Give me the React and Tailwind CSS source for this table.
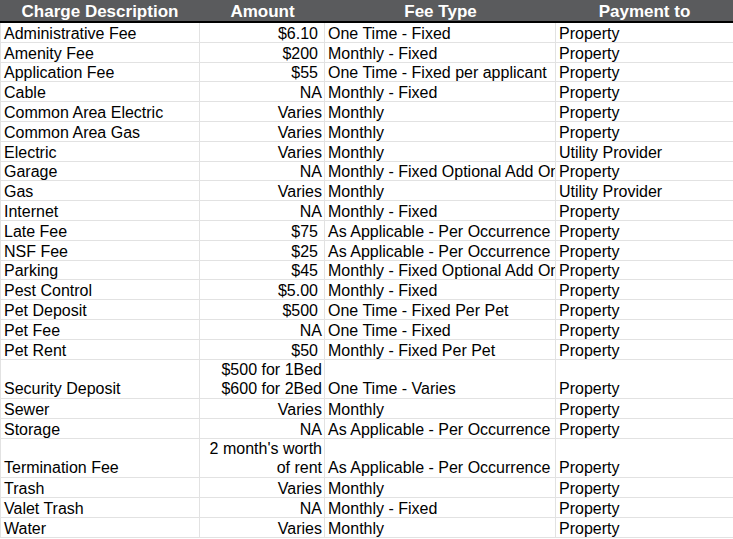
const rows = [
  ["Administrative Fee", "$6.10", "One Time - Fixed", "Property"],
  ["Amenity Fee", "$200", "Monthly - Fixed", "Property"],
  ["Application Fee", "$55", "One Time - Fixed per applicant", "Property"],
  ["Cable", "NA", "Monthly - Fixed", "Property"],
  ["Common Area Electric", "Varies", "Monthly", "Property"],
  ["Common Area Gas", "Varies", "Monthly", "Property"],
  ["Electric", "Varies", "Monthly", "Utility Provider"],
  ["Garage", "NA", "Monthly - Fixed Optional Add On", "Property"],
  ["Gas", "Varies", "Monthly", "Utility Provider"],
  ["Internet", "NA", "Monthly - Fixed", "Property"],
  ["Late Fee", "$75", "As Applicable - Per Occurrence", "Property"],
  ["NSF Fee", "$25", "As Applicable - Per Occurrence", "Property"],
  ["Parking", "$45", "Monthly - Fixed Optional Add On", "Property"],
  ["Pest Control", "$5.00", "Monthly - Fixed", "Property"],
  ["Pet Deposit", "$500", "One Time - Fixed Per Pet", "Property"],
  ["Pet Fee", "NA", "One Time - Fixed", "Property"],
  ["Pet Rent", "$50", "Monthly - Fixed Per Pet", "Property"],
  ["Security Deposit", ["$500 for 1Bed", "$600 for 2Bed"], "One Time - Varies", "Property"],
  ["Sewer", "Varies", "Monthly", "Property"],
  ["Storage", "NA", "As Applicable - Per Occurrence", "Property"],
  ["Termination Fee", ["2 month's worth", "of rent"], "As Applicable - Per Occurrence", "Property"],
  ["Trash", "Varies", "Monthly", "Property"],
  ["Valet Trash", "NA", "Monthly - Fixed", "Property"],
  ["Water", "Varies", "Monthly", "Property"],
];

const cols = "grid grid-cols-[200px_125px_231px_1fr]";

const Cell = ({ children, className = "" }) => (
  <div
    className={`flex items-end overflow-hidden whitespace-nowrap border-r border-[#e2e2e2] ${className}`}
  >
    {children}
  </div>
);

export default function App() {
  return (
    <div
      className="w-[733px] h-[539px] overflow-hidden bg-white text-black"
      style={{ fontFamily: '"Liberation Sans", Arial, sans-serif' }}
    >
      {/* header */}
      <div
        className={`${cols} h-[23px] bg-[#5a5b5d] border-b-2 border-black text-white font-bold text-[17px] leading-[21px] pt-[1px] text-center`}
      >
        <div>Charge Description</div>
        <div>Amount</div>
        <div>Fee Type</div>
        <div>Payment to</div>
      </div>

      {rows.map(([desc, amount, type, payTo]) => {
        const multi = Array.isArray(amount);
        const isMoney = !multi && amount.startsWith("$");
        return (
          <div
            key={desc}
            className={`${cols} border-b border-[#e2e2e2] text-[16px] ${
              multi ? "h-[39.6px] leading-[19px]" : "h-[19.8px] leading-[16px]"
            }`}
          >
            <Cell className="border-l pl-[3px]">{desc}</Cell>
            <Cell className={`justify-end text-right ${isMoney ? "pr-[6px]" : "pr-[2px]"}`}>
              {multi ? (
                <div>
                  {amount.map((line) => (
                    <div key={line}>{line}</div>
                  ))}
                </div>
              ) : (
                amount
              )}
            </Cell>
            <Cell className="pl-[3px]">{type}</Cell>
            <Cell className="pl-[3px] border-r-0">{payTo}</Cell>
          </div>
        );
      })}
    </div>
  );
}
